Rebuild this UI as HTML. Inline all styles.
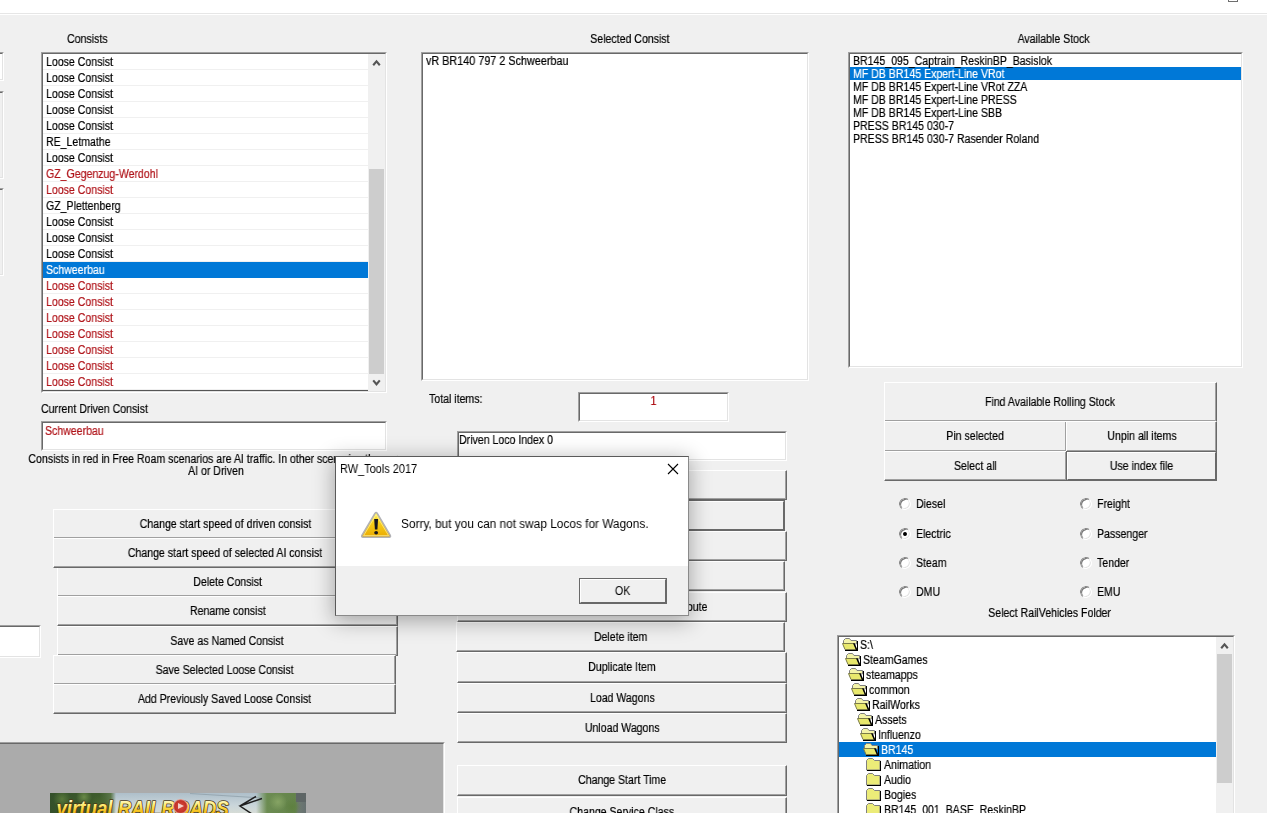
<!DOCTYPE html>
<html><head><meta charset="utf-8"><title>RW_Tools 2017</title>
<style>
html,body{margin:0;padding:0;}
body{width:1267px;height:813px;overflow:hidden;position:relative;background:#f0f0f0;
 font-family:"Liberation Sans",sans-serif;font-size:12.5px;color:#000;line-height:14px;}
div,span{box-sizing:border-box;}
.a{position:absolute;white-space:nowrap;}
.c{text-align:center;}
.t{display:inline-block;transform:scaleX(0.845);transform-origin:0 50%;white-space:nowrap;-webkit-text-stroke:.2px;will-change:transform;}
.tc{display:inline-block;transform:scaleX(0.845);transform-origin:50% 50%;white-space:nowrap;-webkit-text-stroke:.2px;will-change:transform;}
.sunk{position:absolute;border-top:1px solid #a0a0a0;border-left:1px solid #a0a0a0;border-right:1px solid #fff;border-bottom:1px solid #fff;}
.sunk>.in{position:absolute;left:0;top:0;right:0;bottom:0;background:#fff;border-top:1px solid #696969;border-left:1px solid #696969;border-right:1px solid #e3e3e3;border-bottom:1px solid #e3e3e3;overflow:hidden;}
.btn{position:absolute;background:#f0f0f0;border-top:1px solid #fff;border-left:1px solid #fff;border-right:1px solid #696969;border-bottom:1px solid #696969;text-align:center;white-space:nowrap;overflow:hidden;}
.btn:after{content:"";position:absolute;left:0;top:0;right:0;bottom:0;border-right:1px solid #a0a0a0;border-bottom:1px solid #a0a0a0;}
.btn.def{border:1px solid #696969;}
.btn.def:after{border-top:1px solid #fff;border-left:1px solid #fff;border-right:1px solid #696969;border-bottom:1px solid #696969;}
.row{position:absolute;left:0;white-space:nowrap;}
.red{color:#b0141a;}
.sel{background:#0078d7;color:#fff;}
.sb{position:absolute;background:#f0f0f0;}
.thumb{position:absolute;background:#cdcdcd;}
.radio{position:absolute;width:12px;height:12px;border-radius:50%;background:#fff;border:1px solid;border-color:#8a8a8a #fff #fff #8a8a8a;box-shadow:inset 1px 1px 0 #787878,inset -1px -1px 0 #e3e3e3;transform:rotate(-8deg);}
.radio.on:after{content:"";position:absolute;left:3px;top:3px;width:4px;height:4px;border-radius:50%;background:#000;}
.seg{font-family:"Liberation Sans",sans-serif;font-size:12px;}
</style></head><body>
<div class="a" style="left:0;top:0;width:1267px;height:15px;background:#fff"></div>
<div class="a" style="left:0;top:13px;width:1267px;height:1px;background:#e6e6e6"></div>
<div class="a" style="left:1228px;top:0;width:10px;height:2px;border:1px solid #6e6e6e;border-top:none;background:#fff"></div>
<div class="sunk" style="left:-10px;top:52px;width:14px;height:29px"><div class="in"></div></div>
<div class="sunk" style="left:-10px;top:91px;width:14px;height:88px"><div class="in" style="background:#f0f0f0"></div></div>
<div class="sunk" style="left:-10px;top:188px;width:14px;height:88px"><div class="in" style="background:#f0f0f0"></div></div>
<div class="a " style="left:67px;top:32px;"><span class="t">Consists</span></div>
<div class="sunk" style="left:41px;top:52px;width:346px;height:341px"><div class="in">
<div class="row" style="top:0px;width:325px;height:16px;line-height:16px;padding-left:3px;border-bottom:1px solid #f0f0f0;"><span class="t">Loose Consist</span></div>
<div class="row" style="top:16px;width:325px;height:16px;line-height:16px;padding-left:3px;border-bottom:1px solid #f0f0f0;"><span class="t">Loose Consist</span></div>
<div class="row" style="top:32px;width:325px;height:16px;line-height:16px;padding-left:3px;border-bottom:1px solid #f0f0f0;"><span class="t">Loose Consist</span></div>
<div class="row" style="top:48px;width:325px;height:16px;line-height:16px;padding-left:3px;border-bottom:1px solid #f0f0f0;"><span class="t">Loose Consist</span></div>
<div class="row" style="top:64px;width:325px;height:16px;line-height:16px;padding-left:3px;border-bottom:1px solid #f0f0f0;"><span class="t">Loose Consist</span></div>
<div class="row" style="top:80px;width:325px;height:16px;line-height:16px;padding-left:3px;border-bottom:1px solid #f0f0f0;"><span class="t">RE_Letmathe</span></div>
<div class="row" style="top:96px;width:325px;height:16px;line-height:16px;padding-left:3px;border-bottom:1px solid #f0f0f0;"><span class="t">Loose Consist</span></div>
<div class="row red" style="top:112px;width:325px;height:16px;line-height:16px;padding-left:3px;border-bottom:1px solid #f0f0f0;"><span class="t">GZ_Gegenzug-Werdohl</span></div>
<div class="row red" style="top:128px;width:325px;height:16px;line-height:16px;padding-left:3px;border-bottom:1px solid #f0f0f0;"><span class="t">Loose Consist</span></div>
<div class="row" style="top:144px;width:325px;height:16px;line-height:16px;padding-left:3px;border-bottom:1px solid #f0f0f0;"><span class="t">GZ_Plettenberg</span></div>
<div class="row" style="top:160px;width:325px;height:16px;line-height:16px;padding-left:3px;border-bottom:1px solid #f0f0f0;"><span class="t">Loose Consist</span></div>
<div class="row" style="top:176px;width:325px;height:16px;line-height:16px;padding-left:3px;border-bottom:1px solid #f0f0f0;"><span class="t">Loose Consist</span></div>
<div class="row" style="top:192px;width:325px;height:16px;line-height:16px;padding-left:3px;border-bottom:1px solid #f0f0f0;"><span class="t">Loose Consist</span></div>
<div class="row sel" style="top:208px;width:325px;height:16px;line-height:16px;padding-left:3px;"><span class="t">Schweerbau</span></div>
<div class="row red" style="top:224px;width:325px;height:16px;line-height:16px;padding-left:3px;border-bottom:1px solid #f0f0f0;"><span class="t">Loose Consist</span></div>
<div class="row red" style="top:240px;width:325px;height:16px;line-height:16px;padding-left:3px;border-bottom:1px solid #f0f0f0;"><span class="t">Loose Consist</span></div>
<div class="row red" style="top:256px;width:325px;height:16px;line-height:16px;padding-left:3px;border-bottom:1px solid #f0f0f0;"><span class="t">Loose Consist</span></div>
<div class="row red" style="top:272px;width:325px;height:16px;line-height:16px;padding-left:3px;border-bottom:1px solid #f0f0f0;"><span class="t">Loose Consist</span></div>
<div class="row red" style="top:288px;width:325px;height:16px;line-height:16px;padding-left:3px;border-bottom:1px solid #f0f0f0;"><span class="t">Loose Consist</span></div>
<div class="row red" style="top:304px;width:325px;height:16px;line-height:16px;padding-left:3px;border-bottom:1px solid #f0f0f0;"><span class="t">Loose Consist</span></div>
<div class="row red" style="top:320px;width:325px;height:16px;line-height:16px;padding-left:3px;border-bottom:1px solid #f0f0f0;"><span class="t">Loose Consist</span></div>
<div class="a" style="left:0;top:336px;width:325px;height:1px;background:#555"></div>
<div class="sb" style="left:325px;top:0;width:17px;height:337px">
<svg class="a" style="left:0;top:0px" width="17" height="17"><path d="M5.2 11.2 L8.5 7.3 L11.8 11.2" fill="none" stroke="#555" stroke-width="2.1"/></svg>
<div class="thumb" style="left:1px;top:115px;width:15px;height:205px"></div>
<svg class="a" style="left:0;top:320px" width="17" height="17"><path d="M5.2 6.4 L8.5 10.3 L11.8 6.4" fill="none" stroke="#555" stroke-width="2.1"/></svg>
</div>
</div></div>
<div class="a " style="left:41px;top:402px;"><span class="t">Current Driven Consist</span></div>
<div class="sunk" style="left:41px;top:421px;width:346px;height:30px"><div class="in">
<div class="a red" style="left:2px;top:1px"><span class="t">Schweerbau</span></div>
</div></div>
<div class="a c " style="left:-184px;top:452px;width:800px;"><span class="tc">Consists in red in Free Roam scenarios are AI traffic. In other scenarios they are</span></div>
<div class="a c " style="left:-184px;top:464px;width:800px;"><span class="tc">AI or Driven</span></div>
<div class="btn" style="left:57px;top:567px;width:341px;height:30px;line-height:28px;"><span class="tc">Delete Consist</span></div>
<div class="btn" style="left:53px;top:509px;width:344px;height:30px;line-height:28px;"><span class="tc">Change start speed of driven consist</span></div>
<div class="btn" style="left:53px;top:538px;width:344px;height:30px;line-height:28px;"><span class="tc">Change start speed of selected AI consist</span></div>
<div class="btn" style="left:57px;top:596px;width:341px;height:30px;line-height:28px;"><span class="tc">Rename consist</span></div>
<div class="btn" style="left:57px;top:626px;width:341px;height:30px;line-height:28px;"><span class="tc">Save as Named Consist</span></div>
<div class="btn" style="left:53px;top:655px;width:343px;height:30px;line-height:28px;"><span class="tc">Save Selected Loose Consist</span></div>
<div class="btn" style="left:53px;top:684px;width:343px;height:30px;line-height:28px;"><span class="tc">Add Previously Saved Loose Consist</span></div>
<div class="sunk" style="left:-4px;top:625px;width:45px;height:33px"><div class="in">
</div></div>
<div class="sunk" style="left:-6px;top:742px;width:451px;height:100px"><div class="in" style="background:#ababab"></div></div>
<div class="a" style="left:50px;top:793px;width:256px;height:20px;overflow:hidden;background:linear-gradient(180deg,#aebfca 0,#c9d5da 60%,#d6dcd6 100%)">
<div class="a" style="left:0;top:0;width:66px;height:20px;background:radial-gradient(circle at 12px 6px,#58783a 0,rgba(88,120,58,0) 9px),radial-gradient(circle at 34px 4px,#6a8a48 0,rgba(106,138,72,0) 8px),radial-gradient(circle at 50px 12px,#4a6a30 0,rgba(74,106,48,0) 10px),linear-gradient(90deg,#34502a 0,#3e5c2c 75%,#5a7648 92%,rgba(120,150,120,0) 100%)"></div>
<div class="a" style="left:206px;top:0;width:50px;height:20px;background:radial-gradient(circle at 22px 9px,#86a464 0,rgba(134,164,100,0) 9px),radial-gradient(circle at 36px 14px,#5e8040 0,rgba(94,128,64,0) 9px),linear-gradient(90deg,rgba(120,150,110,0) 0,#6c8c52 22%,#64844a 78%,#6e7a72 84%,#667070 100%)"></div>
<div class="a" style="left:246px;top:0;width:10px;height:9px;background:#5e6666"></div>
<svg class="a" style="left:140px;top:0" width="116" height="20"><path d="M0 0.5 L72 5" stroke="#8fa0aa" stroke-width=".8" fill="none"/><path d="M72 5.5 L50 13 L62 21 M50 13 L66 3.5" fill="none" stroke="#1e1e1e" stroke-width="1.5"/></svg>
<svg class="a" style="left:0;top:0" width="256" height="20"><defs><linearGradient id="tg" gradientUnits="userSpaceOnUse" x1="0" y1="6" x2="0" y2="22"><stop offset="0" stop-color="#fffde0"/><stop offset=".35" stop-color="#ffee78"/><stop offset=".7" stop-color="#f6c828"/><stop offset="1" stop-color="#e8a810"/></linearGradient></defs>
<text x="7.6" y="22.6" transform="scale(.85,1)" font-family="Liberation Sans, sans-serif" font-weight="bold" font-style="italic" font-size="22" fill="url(#tg)" stroke="#4a3a14" stroke-width="1.7" stroke-linejoin="round" paint-order="stroke">virtual RAILROADS</text></svg>
<div class="a" style="left:123px;top:6px;width:15px;height:15px;border-radius:50%;background:radial-gradient(circle at 50% 50%,#d84a3c 0,#c23228 55%,#e8b0a4 70%,#a83a30 100%)"></div>
<div class="a" style="left:128px;top:10px;width:0;height:0;border-left:6px solid #f4d0c8;border-top:3.5px solid transparent;border-bottom:3.5px solid transparent"></div>
</div>
<div class="a c " style="left:230px;top:32px;width:800px;"><span class="tc">Selected Consist</span></div>
<div class="sunk" style="left:421px;top:52px;width:388px;height:329px"><div class="in">
<div class="a" style="left:3px;top:0;line-height:15px"><span class="t" style="transform:scaleX(.865)">vR BR140 797 2 Schweerbau</span></div>
</div></div>
<div class="a " style="left:429px;top:392px;"><span class="t">Total items:</span></div>
<div class="sunk" style="left:578px;top:392px;width:151px;height:30px"><div class="in">
<div class="a c red" style="left:0;top:0px;width:147px"><span class="tc">1</span></div>
</div></div>
<div class="sunk" style="left:457px;top:431px;width:330px;height:30px"><div class="in">
<div class="a" style="left:0px;top:0px"><span class="t">Driven Loco Index 0</span></div>
</div></div>
<div class="btn" style="left:457px;top:470px;width:330px;height:30px;line-height:28px;"><span class="tc">Add to consist</span></div>
<div class="btn def" style="left:456px;top:500px;width:329px;height:31px;line-height:29px;"><span class="tc">Swap selected item</span></div>
<div class="btn" style="left:457px;top:531px;width:330px;height:30px;line-height:28px;"><span class="tc">Reverse item</span></div>
<div class="btn" style="left:456px;top:561px;width:329px;height:30px;line-height:28px;"><span class="tc">Move item up</span></div>
<div class="btn" style="left:457px;top:592px;width:330px;height:30px;line-height:28px;text-align:right"><span class="t" style="transform-origin:100% 50%;margin-right:79px">Swap item with item from another route</span></div>
<div class="btn" style="left:456px;top:622px;width:329px;height:30px;line-height:28px;"><span class="tc">Delete item</span></div>
<div class="btn" style="left:457px;top:652px;width:330px;height:31px;line-height:29px;"><span class="tc">Duplicate Item</span></div>
<div class="btn" style="left:457px;top:683px;width:330px;height:30px;line-height:28px;"><span class="tc">Load Wagons</span></div>
<div class="btn" style="left:457px;top:713px;width:330px;height:30px;line-height:28px;"><span class="tc">Unload Wagons</span></div>
<div class="btn" style="left:457px;top:765px;width:330px;height:31px;line-height:29px;"><span class="tc">Change Start Time</span></div>
<div class="btn" style="left:457px;top:797px;width:330px;height:31px;line-height:29px;"><span class="tc">Change Service Class</span></div>
<div class="a c " style="left:654px;top:32px;width:800px;"><span class="tc">Available Stock</span></div>
<div class="sunk" style="left:848px;top:52px;width:395px;height:316px"><div class="in">
<div class="a sel" style="left:0;top:13px;width:391px;height:13px"></div>
<div class="row" style="top:0px;width:391px;height:13px;line-height:15px;padding-left:3px;"><span class="t">BR145_095_Captrain_ReskinBP_Basislok</span></div>
<div class="row" style="top:13px;width:391px;height:13px;line-height:15px;padding-left:3px;color:#fff;"><span class="t">MF DB BR145 Expert-Line VRot</span></div>
<div class="row" style="top:26px;width:391px;height:13px;line-height:15px;padding-left:3px;"><span class="t">MF DB BR145 Expert-Line VRot ZZA</span></div>
<div class="row" style="top:39px;width:391px;height:13px;line-height:15px;padding-left:3px;"><span class="t">MF DB BR145 Expert-Line PRESS</span></div>
<div class="row" style="top:52px;width:391px;height:13px;line-height:15px;padding-left:3px;"><span class="t">MF DB BR145 Expert-Line SBB</span></div>
<div class="row" style="top:65px;width:391px;height:13px;line-height:15px;padding-left:3px;"><span class="t">PRESS BR145 030-7</span></div>
<div class="row" style="top:78px;width:391px;height:13px;line-height:15px;padding-left:3px;"><span class="t">PRESS BR145 030-7 Rasender Roland</span></div>
</div></div>
<div class="btn" style="left:884px;top:382px;width:333px;height:40px;line-height:38px;"><span class="tc">Find Available Rolling Stock</span></div>
<div class="btn" style="left:884px;top:421px;width:183px;height:31px;line-height:29px;"><span class="tc">Pin selected</span></div>
<div class="btn" style="left:1066px;top:421px;width:151px;height:31px;line-height:29px;"><span class="tc">Unpin all items</span></div>
<div class="btn" style="left:884px;top:451px;width:183px;height:30px;line-height:28px;"><span class="tc">Select all</span></div>
<div class="btn def" style="left:1066px;top:451px;width:151px;height:30px;line-height:28px;"><span class="tc">Use index file</span></div>
<div class="radio" style="left:899px;top:498px"></div>
<div class="a " style="left:916px;top:497px;"><span class="t">Diesel</span></div>
<div class="radio on" style="left:899px;top:528px"></div>
<div class="a " style="left:916px;top:527px;"><span class="t">Electric</span></div>
<div class="radio" style="left:899px;top:557px"></div>
<div class="a " style="left:916px;top:556px;"><span class="t">Steam</span></div>
<div class="radio" style="left:899px;top:586px"></div>
<div class="a " style="left:916px;top:585px;"><span class="t">DMU</span></div>
<div class="radio" style="left:1080px;top:498px"></div>
<div class="a " style="left:1097px;top:497px;"><span class="t">Freight</span></div>
<div class="radio" style="left:1080px;top:528px"></div>
<div class="a " style="left:1097px;top:527px;"><span class="t">Passenger</span></div>
<div class="radio" style="left:1080px;top:557px"></div>
<div class="a " style="left:1097px;top:556px;"><span class="t">Tender</span></div>
<div class="radio" style="left:1080px;top:586px"></div>
<div class="a " style="left:1097px;top:585px;"><span class="t">EMU</span></div>
<div class="a c " style="left:650px;top:606px;width:800px;"><span class="tc">Select RailVehicles Folder</span></div>
<div class="sunk" style="left:837px;top:635px;width:398px;height:200px"><div class="in">
<svg class="a" style="left:3px;top:1px" width="17" height="13" viewBox="0 0 17 13"><path d="M1.5 6 L1.5 2.5 L3.5 .5 L7.5 .5 L9 2.5 L14.5 2.5 L14.5 6 Z" fill="#f3f3a8" stroke="#808080"/><rect x="15" y="3" width="1" height="10" fill="#000"/><rect x="3" y="12" width="13" height="1" fill="#000"/><path d="M.5 5.5 L12 5.5 L14.5 11.5 L3 11.5 Z" fill="#e8e86c" stroke="#7c7c48"/><path d="M11.8 5.2 L14.7 12" stroke="#000" stroke-width="1.5" fill="none"/></svg>
<div class="a" style="left:21px;top:0px;line-height:17px;"><span class="t">S:\</span></div>
<svg class="a" style="left:6px;top:16px" width="17" height="13" viewBox="0 0 17 13"><path d="M1.5 6 L1.5 2.5 L3.5 .5 L7.5 .5 L9 2.5 L14.5 2.5 L14.5 6 Z" fill="#f3f3a8" stroke="#808080"/><rect x="15" y="3" width="1" height="10" fill="#000"/><rect x="3" y="12" width="13" height="1" fill="#000"/><path d="M.5 5.5 L12 5.5 L14.5 11.5 L3 11.5 Z" fill="#e8e86c" stroke="#7c7c48"/><path d="M11.8 5.2 L14.7 12" stroke="#000" stroke-width="1.5" fill="none"/></svg>
<div class="a" style="left:24px;top:15px;line-height:17px;"><span class="t">SteamGames</span></div>
<svg class="a" style="left:9px;top:31px" width="17" height="13" viewBox="0 0 17 13"><path d="M1.5 6 L1.5 2.5 L3.5 .5 L7.5 .5 L9 2.5 L14.5 2.5 L14.5 6 Z" fill="#f3f3a8" stroke="#808080"/><rect x="15" y="3" width="1" height="10" fill="#000"/><rect x="3" y="12" width="13" height="1" fill="#000"/><path d="M.5 5.5 L12 5.5 L14.5 11.5 L3 11.5 Z" fill="#e8e86c" stroke="#7c7c48"/><path d="M11.8 5.2 L14.7 12" stroke="#000" stroke-width="1.5" fill="none"/></svg>
<div class="a" style="left:27px;top:30px;line-height:17px;"><span class="t">steamapps</span></div>
<svg class="a" style="left:12px;top:46px" width="17" height="13" viewBox="0 0 17 13"><path d="M1.5 6 L1.5 2.5 L3.5 .5 L7.5 .5 L9 2.5 L14.5 2.5 L14.5 6 Z" fill="#f3f3a8" stroke="#808080"/><rect x="15" y="3" width="1" height="10" fill="#000"/><rect x="3" y="12" width="13" height="1" fill="#000"/><path d="M.5 5.5 L12 5.5 L14.5 11.5 L3 11.5 Z" fill="#e8e86c" stroke="#7c7c48"/><path d="M11.8 5.2 L14.7 12" stroke="#000" stroke-width="1.5" fill="none"/></svg>
<div class="a" style="left:30px;top:45px;line-height:17px;"><span class="t">common</span></div>
<svg class="a" style="left:15px;top:61px" width="17" height="13" viewBox="0 0 17 13"><path d="M1.5 6 L1.5 2.5 L3.5 .5 L7.5 .5 L9 2.5 L14.5 2.5 L14.5 6 Z" fill="#f3f3a8" stroke="#808080"/><rect x="15" y="3" width="1" height="10" fill="#000"/><rect x="3" y="12" width="13" height="1" fill="#000"/><path d="M.5 5.5 L12 5.5 L14.5 11.5 L3 11.5 Z" fill="#e8e86c" stroke="#7c7c48"/><path d="M11.8 5.2 L14.7 12" stroke="#000" stroke-width="1.5" fill="none"/></svg>
<div class="a" style="left:33px;top:60px;line-height:17px;"><span class="t">RailWorks</span></div>
<svg class="a" style="left:18px;top:76px" width="17" height="13" viewBox="0 0 17 13"><path d="M1.5 6 L1.5 2.5 L3.5 .5 L7.5 .5 L9 2.5 L14.5 2.5 L14.5 6 Z" fill="#f3f3a8" stroke="#808080"/><rect x="15" y="3" width="1" height="10" fill="#000"/><rect x="3" y="12" width="13" height="1" fill="#000"/><path d="M.5 5.5 L12 5.5 L14.5 11.5 L3 11.5 Z" fill="#e8e86c" stroke="#7c7c48"/><path d="M11.8 5.2 L14.7 12" stroke="#000" stroke-width="1.5" fill="none"/></svg>
<div class="a" style="left:36px;top:75px;line-height:17px;"><span class="t">Assets</span></div>
<svg class="a" style="left:21px;top:91px" width="17" height="13" viewBox="0 0 17 13"><path d="M1.5 6 L1.5 2.5 L3.5 .5 L7.5 .5 L9 2.5 L14.5 2.5 L14.5 6 Z" fill="#f3f3a8" stroke="#808080"/><rect x="15" y="3" width="1" height="10" fill="#000"/><rect x="3" y="12" width="13" height="1" fill="#000"/><path d="M.5 5.5 L12 5.5 L14.5 11.5 L3 11.5 Z" fill="#e8e86c" stroke="#7c7c48"/><path d="M11.8 5.2 L14.7 12" stroke="#000" stroke-width="1.5" fill="none"/></svg>
<div class="a" style="left:39px;top:90px;line-height:17px;"><span class="t">Influenzo</span></div>
<div class="a sel" style="left:0;top:105px;width:377px;height:15px"></div>
<svg class="a" style="left:24px;top:106px" width="17" height="13" viewBox="0 0 17 13"><path d="M1.5 6 L1.5 2.5 L3.5 .5 L7.5 .5 L9 2.5 L14.5 2.5 L14.5 6 Z" fill="#f3f3a8" stroke="#808080"/><rect x="15" y="3" width="1" height="10" fill="#000"/><rect x="3" y="12" width="13" height="1" fill="#000"/><path d="M.5 5.5 L12 5.5 L14.5 11.5 L3 11.5 Z" fill="#e8e86c" stroke="#7c7c48"/><path d="M11.8 5.2 L14.7 12" stroke="#000" stroke-width="1.5" fill="none"/></svg>
<div class="a" style="left:42px;top:105px;line-height:17px;color:#fff;"><span class="t">BR145</span></div>
<svg class="a" style="left:27px;top:121px" width="16" height="13" viewBox="0 0 16 13"><path d="M.5 12 L.5 2.5 L2.5 .5 L6.5 .5 L8.5 2.5 L14 2.5 L14 12 Z" fill="#ecec78" stroke="#808080"/><rect x="14" y="3" width="1" height="10" fill="#000"/><rect x="1" y="12" width="14" height="1" fill="#000"/></svg>
<div class="a" style="left:45px;top:120px;line-height:17px;"><span class="t">Animation</span></div>
<svg class="a" style="left:27px;top:136px" width="16" height="13" viewBox="0 0 16 13"><path d="M.5 12 L.5 2.5 L2.5 .5 L6.5 .5 L8.5 2.5 L14 2.5 L14 12 Z" fill="#ecec78" stroke="#808080"/><rect x="14" y="3" width="1" height="10" fill="#000"/><rect x="1" y="12" width="14" height="1" fill="#000"/></svg>
<div class="a" style="left:45px;top:135px;line-height:17px;"><span class="t">Audio</span></div>
<svg class="a" style="left:27px;top:151px" width="16" height="13" viewBox="0 0 16 13"><path d="M.5 12 L.5 2.5 L2.5 .5 L6.5 .5 L8.5 2.5 L14 2.5 L14 12 Z" fill="#ecec78" stroke="#808080"/><rect x="14" y="3" width="1" height="10" fill="#000"/><rect x="1" y="12" width="14" height="1" fill="#000"/></svg>
<div class="a" style="left:45px;top:150px;line-height:17px;"><span class="t">Bogies</span></div>
<svg class="a" style="left:27px;top:166px" width="16" height="13" viewBox="0 0 16 13"><path d="M.5 12 L.5 2.5 L2.5 .5 L6.5 .5 L8.5 2.5 L14 2.5 L14 12 Z" fill="#ecec78" stroke="#808080"/><rect x="14" y="3" width="1" height="10" fill="#000"/><rect x="1" y="12" width="14" height="1" fill="#000"/></svg>
<div class="a" style="left:45px;top:165px;line-height:17px;"><span class="t">BR145_001_BASE_ReskinBP</span></div>
<div class="sb" style="left:377px;top:0;width:17px;height:200px">
<svg class="a" style="left:0;top:0px" width="17" height="17"><path d="M5.2 11.2 L8.5 7.3 L11.8 11.2" fill="none" stroke="#555" stroke-width="2.1"/></svg>
<div class="thumb" style="left:1px;top:17px;width:15px;height:129px"></div>
</div>
</div></div>
<div class="a seg" style="left:335px;top:456px;width:354px;height:160px;background:#fff;border:1px solid #5a5a5a;border-right-color:#8a8a8a;border-bottom-color:#8a8a8a;box-shadow:0 4px 20px 1px rgba(0,0,0,.32)">
<div class="a" style="left:4px;top:5px;font-size:12px;line-height:14px"><span class="t" style="transform:scaleX(.913);-webkit-text-stroke:0">RW_Tools 2017</span></div>
<svg class="a" style="left:331px;top:6px" width="12" height="12"><path d="M1 1 L11 11 M11 1 L1 11" stroke="#000" stroke-width="1.1" fill="none"/></svg>
<div class="a" style="left:0;top:109px;width:352px;height:49px;background:#f0f0f0"></div>
<svg class="a" style="left:24px;top:53px" width="34" height="30" viewBox="0 0 34 30">
<defs><linearGradient id="wg" x1="0" y1="0" x2="0" y2="1"><stop offset="0" stop-color="#fff45e"/><stop offset=".4" stop-color="#f9d01a"/><stop offset="1" stop-color="#e9a900"/></linearGradient></defs>
<path d="M14.9 3.5 Q16.1 1.5 17.3 3.5 L30.3 25.3 Q31.1 27.2 29.2 27.2 L3 27.2 Q1.1 27.2 1.9 25.3 Z" fill="url(#wg)" stroke="#b2b2b6" stroke-width="1.5"/>
<path d="M16.1 4.6 L28.6 25.6 L3.6 25.6 Z" fill="none" stroke="#fff6b0" stroke-width=".8" opacity=".8"/>
<path d="M14.2 9 L18.1 9 L17.4 19.6 L14.9 19.6 Z" fill="#15151f"/><ellipse cx="16.15" cy="22.7" rx="1.9" ry="1.75" fill="#15151f"/></svg>
<div class="a" style="left:65px;top:59px;font-size:12px;line-height:16px"><span class="t" style="transform:scaleX(.987);-webkit-text-stroke:0">Sorry, but you can not swap Locos for Wagons.</span></div>
<div class="btn def" style="left:243px;top:121px;width:88px;height:26px;line-height:24px;font-size:12px"><span class="tc" style="transform:scaleX(.9);-webkit-text-stroke:0">OK</span></div>
</div>
</body></html>
